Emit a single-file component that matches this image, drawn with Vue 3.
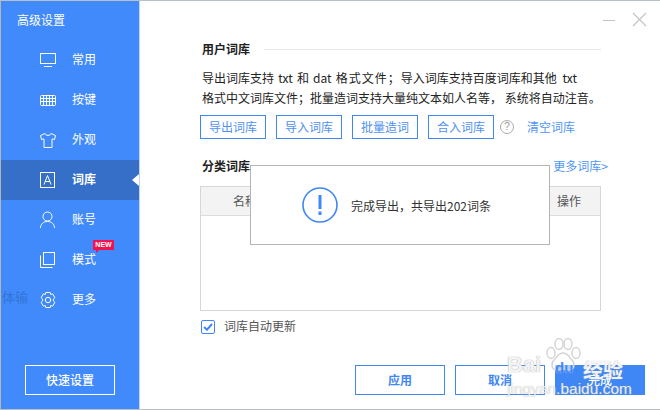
<script setup>
const items = [
  { label: '常用', icon: 'monitor' },
  { label: '按键', icon: 'keyboard' },
  { label: '外观', icon: 'shirt' },
  { label: '词库', icon: 'font', active: true },
  { label: '账号', icon: 'user' },
  { label: '模式', icon: 'copy', badge: true },
  { label: '更多', icon: 'gear' }
]
const actions = ['导出词库', '导入词库', '批量造词', '合入词库']
</script>

<template>
  <div class="window">
    <aside class="sidebar">
      <div class="brand">高级设置</div>
      <nav class="nav">
        <div v-for="item in items" :key="item.label" class="nav-item" :class="{ active: item.active }">
          <svg class="nav-icon" width="18" height="18" viewBox="0 0 18 18" fill="none" stroke="#fff" stroke-width="1">
            <template v-if="item.icon === 'monitor'">
              <rect x="1.5" y="2.5" width="15" height="10" />
              <path d="M5 15.500h8" />
            </template>
            <template v-else-if="item.icon === 'keyboard'">
              <rect x="1.5" y="4.5" width="15" height="10" rx="1" />
              <path d="M1.500 7.500h15M1.500 10.500h15M4.500 4.500v10M7.500 4.500v10M10.500 4.500v10M13.500 4.500v10" />
            </template>
            <template v-else-if="item.icon === 'shirt'">
              <path d="M6 2.500 1.500 4.500l1 4 2.500-.5v8.500h8V8l2.500.5 1-4L12 2.500c-.5 2.500-5.500 2.500-6 0z" />
            </template>
            <template v-else-if="item.icon === 'font'">
              <rect x="1.500" y="1.500" width="14" height="15" />
              <path d="m5 13.500 3.500-9 3.500 9M6 10.500h5" />
            </template>
            <template v-else-if="item.icon === 'user'">
              <circle cx="8.500" cy="5.500" r="4.500" />
              <path d="M1.500 17c0-4 3-6.500 7-6.500s7 2.500 7 6.500" />
            </template>
            <template v-else-if="item.icon === 'copy'">
              <rect x="4.500" y="1.500" width="11" height="12" />
              <path d="M1.500 4.500v12h12" />
            </template>
            <template v-else>
              <circle cx="9" cy="9" r="2.700" />
              <path d="M6.800 1.500h4.400l.6 2 1.900-.6 2.200 3.800-1.500 1.400v1.800l1.500 1.400-2.200 3.800-1.900-.6-.6 2H6.800l-.6-2-1.900.6-2.200-3.800 1.500-1.400V8.100L2.100 6.700l2.200-3.800 1.900.6z" />
            </template>
          </svg>
          <span class="nav-label">{{ item.label }}</span>
          <span v-if="item.badge" class="badge">NEW</span>
        </div>
      </nav>
      <span class="ghost">体输</span>
      <button class="quick">快速设置</button>
    </aside>

    <main class="main">
      <div class="winbar">
        <span class="minimize"></span>
        <svg width="15" height="15" viewBox="0 0 15 15" stroke="#c4c4c4" stroke-width="1.200" fill="none"><path d="m1 1 13 13M14 1 1 14" /></svg>
      </div>

      <section class="user">
        <div class="section-head">
          <h2>用户词库</h2>
          <span class="rule"></span>
        </div>
        <p class="desc">导出词库支持<span class="wide"> txt 和 dat </span><span class="spaced">格式文件；</span>导入词库支持百度词库和其他<span class="wider"> txt</span><br>格式中文词库文件；批量造词支持大量纯文本如人名等， 系统将自动注音。</p>
        <div class="actions">
          <button v-for="a in actions" :key="a" class="outline">{{ a }}</button>
          <span class="help">?</span>
          <a class="link clear">清空词库</a>
        </div>
      </section>

      <section class="cats">
        <div class="cat-head">
          <h2>分类词库</h2>
          <a class="link">更多词库&gt;</a>
        </div>
        <div class="table">
          <div class="thead">
            <span class="th-name">名称</span>
            <span class="th-op">操作</span>
          </div>
        </div>
        <label class="check">
          <span class="box">
            <svg width="10" height="8" viewBox="0 0 10 8" fill="none" stroke="#3f87f5" stroke-width="2"><path d="m1 4 3 2.700L9 1" /></svg>
          </span>
          <span class="check-text">词库自动更新</span>
        </label>
      </section>

      <footer class="footer">
        <button class="big">应用</button>
        <button class="big">取消</button>
        <button class="big primary">完成</button>
      </footer>

      <div class="toast">
        <svg width="36" height="36" viewBox="0 0 36 36" fill="none">
          <circle cx="18" cy="18" r="17" stroke="#3f87f5" stroke-width="1.600" />
          <path d="M18 8v14" stroke="#3f87f5" stroke-width="3" />
          <path d="M18 24.500v3.500" stroke="#3f87f5" stroke-width="3" />
        </svg>
        <span class="toast-text">完成导出，共导出202词条</span>
      </div>
    </main>

    <div class="watermark" aria-hidden="true">
      <svg class="wm-paw" width="36" height="38" viewBox="0 0 36 38" fill="rgba(255,255,255,.55)" stroke="#d4d4d4" stroke-width="1.500">
        <ellipse cx="6" cy="15" rx="4" ry="5.500" />
        <ellipse cx="14" cy="6" rx="4" ry="5.500" />
        <ellipse cx="23" cy="6" rx="4" ry="5.500" />
        <ellipse cx="31" cy="15" rx="4" ry="5.500" />
        <path d="M18 15c5 0 6 4 9 7s3 10-3 10c-3 0-4-1-6-1s-3 1-6 1c-6 0-6-7-3-10s4-7 9-7z" />
      </svg>
      <span class="wm-bai">Bai</span>
      <span class="wm-du">du</span>
      <span class="wm-jy">经验</span>
      <span class="wm-url">jingyan.baidu.com</span>
    </div>
  </div>
</template>

<style>
html, body { margin: 0; background: #fff; }
</style>

<style scoped>
.window {
  position: relative;
  width: 660px;
  height: 410px;
  box-sizing: border-box;
  display: flex;
  overflow: hidden;
  background: #fff;
  border: 1px solid #b8c0cc;
  border-right: 0;
  border-left-color: #b5b5b5;
  font-family: "Noto Sans CJK SC", "Liberation Sans", sans-serif;
  font-size: 12px;
  color: #333;
}
.sidebar {
  position: relative;
  width: 138px;
  flex: none;
  background: #418afb;
  color: #fff;
  display: flex;
  flex-direction: column;
  border-right: 1px solid #c4d4e8;
}
.brand { height: 39px; line-height: 37px; padding-left: 16px; }
.nav { display: flex; flex-direction: column; }
.nav-item {
  position: relative;
  height: 40px;
  display: flex;
  align-items: center;
  padding-left: 38px;
}
.nav-item.active { background: #356fc7; font-weight: 700; }
.nav-item.active::after {
  content: "";
  position: absolute;
  right: 0;
  top: 14px;
  border: 6px solid transparent;
  border-right: 7px solid #fff;
  border-left: 0;
}
.nav-icon { flex: none; }
.nav-label { margin: 0 0 3px 15px; }
.badge {
  position: absolute;
  left: 92px;
  top: 0;
  width: 21px;
  height: 10px;
  background: #f5104f;
  font: 700 7px/10px "Liberation Sans", sans-serif;
  text-align: center;
}
.badge::after {
  content: "";
  position: absolute;
  left: 3px;
  top: 10px;
  border-top: 3px solid #f5104f;
  border-right: 3px solid transparent;
}
.ghost {
  position: absolute;
  left: 1px;
  top: 286px;
  color: #3274d8;
  font-size: 13px;
}
.quick {
  position: absolute;
  left: 24px;
  top: 364px;
  width: 90px;
  height: 30px;
  box-sizing: border-box;
  background: transparent;
  border: 1px solid #fff;
  color: #fff;
  font: 500 12px "Noto Sans CJK SC", sans-serif;
  padding: 0 0 2px;
}
.main {
  position: relative;
  flex: 1;
  padding: 0 59px 0 60px;
  min-width: 0;
}
.winbar {
  height: 26px;
  display: flex;
  justify-content: flex-end;
  align-items: flex-end;
  gap: 17px;
  margin-right: -46px;
}
.minimize { width: 12px; height: 1px; background: #c4c4c4; margin-bottom: 6px; }
h2 { margin: 0 0 2px; font-size: 12px; font-weight: 700; color: #222; }
.section-head { display: flex; align-items: center; gap: 14px; margin-top: 13px; height: 18px; padding-left: 2px; }
.rule { flex: 1; height: 1px; background: #e6e6e6; }
.desc { margin: 10px 0 0; line-height: 20px; font-size: 12px; color: #222; white-space: nowrap; padding-left: 2px; }
.wide { word-spacing: 1.5px; }
.spaced { letter-spacing: 1px; }
.wider { word-spacing: 3px; }
.actions { display: flex; align-items: center; margin-top: 7px; height: 24px; }
.outline {
  width: 66px;
  height: 24px;
  margin-right: 10px;
  padding: 0 0 2px;
  box-sizing: border-box;
  background: #fff;
  border: 1px solid #3f87f5;
  color: #4f91f0;
  font: 12px "Noto Sans CJK SC", sans-serif;
}
.help {
  width: 12px;
  height: 12px;
  margin-left: -4px;
  border: 1px solid #aaa;
  border-radius: 50%;
  color: #999;
  font: 10px/12px "Liberation Sans", sans-serif;
  text-align: center;
}
.link { color: #4f96f5; font-size: 12px; margin-bottom: 1px; }
.clear { margin-left: 13px; }
.cats { margin-top: 17px; }
.cat-head { display: flex; justify-content: space-between; align-items: center; height: 20px; margin-right: -7px; padding-left: 2px; }
.table {
  box-sizing: border-box;
  height: 125px;
  margin-top: 10px;
  border: 1px solid #d4d7dc;
}
.thead {
  position: relative;
  height: 28px;
  background: #f3f3f3;
  border-bottom: 1px solid #dcdcdc;
  line-height: 28px;
  color: #555;
}
.th-name { position: absolute; left: 32px; }
.th-op { position: absolute; right: 19px; }
.check { display: flex; align-items: center; gap: 9px; margin-top: 8px; height: 16px; padding-left: 1px; color: #555; }
.check-text { margin-bottom: 3px; }
.box {
  width: 14px;
  height: 14px;
  box-sizing: border-box;
  border: 1px solid #3f87f5;
  border-radius: 2px;
  display: flex;
  align-items: center;
  justify-content: center;
}
.footer {
  position: absolute;
  right: 15px;
  top: 364px;
  display: flex;
  gap: 10px;
}
.big {
  width: 90px;
  height: 30px;
  padding: 0 0 2px;
  box-sizing: border-box;
  background: #fff;
  border: 1px solid #3f87f5;
  color: #3f87f5;
  font: 700 12px "Noto Sans CJK SC", sans-serif;
}
.big.primary { background: #3f87f5; color: #fff; font-weight: 500; }
.toast {
  position: absolute;
  left: 110px;
  top: 164px;
  width: 300px;
  height: 80px;
  box-sizing: border-box;
  background: #fff;
  border: 1px solid #b4b4b4;
  display: flex;
  align-items: center;
  padding-left: 51px;
  gap: 13px;
  color: #333;
}
.watermark {
  position: absolute;
  left: 0;
  top: 0;
  width: 100%;
  height: 100%;
  pointer-events: none;
  font-family: "Liberation Sans", sans-serif;
}
.wm-paw { position: absolute; left: 544px; top: 337px; }
.wm-bai {
  position: absolute;
  left: 506px;
  top: 351px;
  font: 700 22px/26px "Liberation Sans", sans-serif;
  color: rgba(255, 255, 255, .85);
  text-shadow: 0 0 1px #b5b5b5, 0 0 1px #b5b5b5;
}
.wm-du {
  position: absolute;
  left: 554px;
  top: 357px;
  font: 700 15px/20px "Liberation Sans", sans-serif;
  color: #3f87f5;
  text-shadow: 0 0 1px rgba(255, 255, 255, .8);
}
.wm-jy {
  position: absolute;
  left: 582px;
  top: 356px;
  font: 700 20px/26px "Noto Sans CJK SC", sans-serif;
  color: rgba(255, 255, 255, .85);
  text-shadow: 0 0 1px #b5b5b5;
}
.wm-url {
  position: absolute;
  left: 506px;
  top: 379px;
  font: 15.500px/17px "Liberation Sans", sans-serif;
  color: rgba(255, 255, 255, .8);
  text-shadow: 0 0 1px #aaa;
  white-space: nowrap;
}
</style>
